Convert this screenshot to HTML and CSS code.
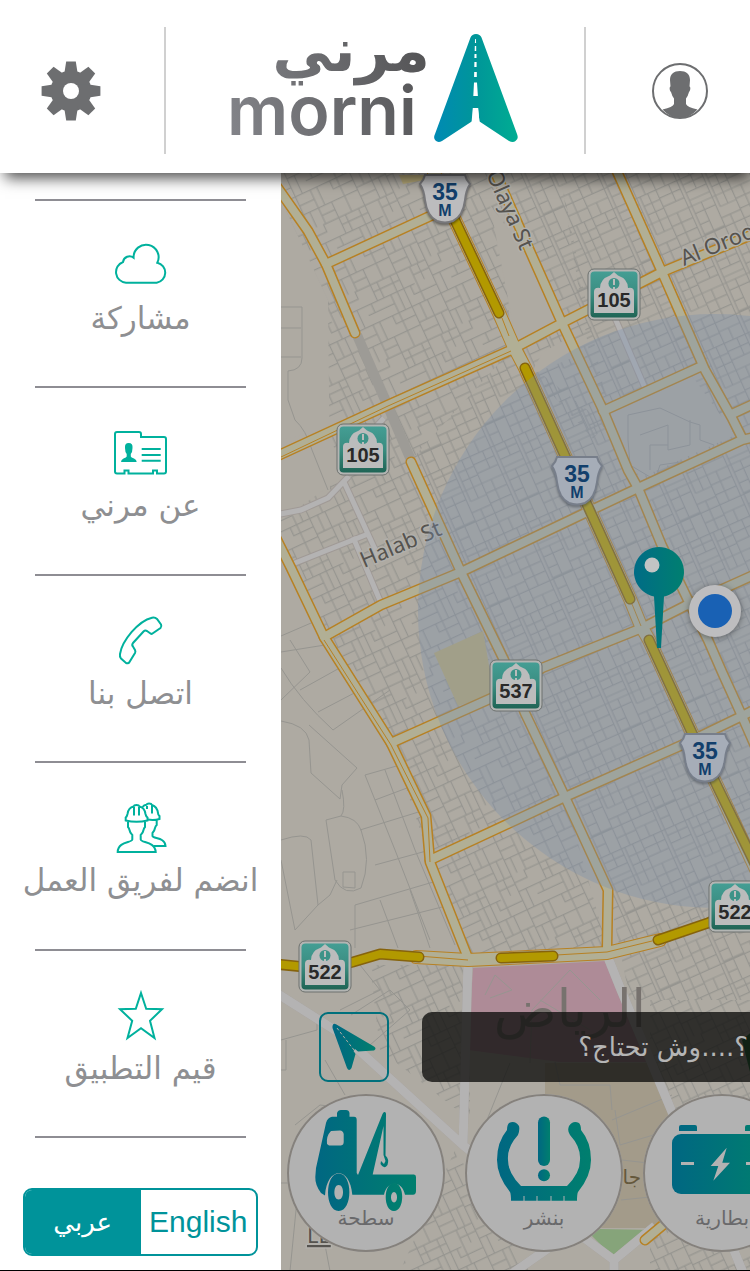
FILE: index.html
```
<!DOCTYPE html>
<html lang="ar">
<head>
<meta charset="utf-8">
<meta name="viewport" content="width=device-width, initial-scale=1">
<title>مرني</title>
<link rel="stylesheet" href="styles.css">
</head>
<body>
<header class="topbar">
  <button class="topbar-button settings" type="button" aria-label="الإعدادات">
    <svg class="gear" viewBox="-30 -30 60 60" aria-hidden="true">
      <defs><path id="teeth" d="M-4.8-29.4H4.8L6.6-18V18L4.8 29.4H-4.8L-6.6 18V-18Z"/></defs>
      <circle r="20.5"/>
      <use href="#teeth"/><use href="#teeth" transform="rotate(45)"/><use href="#teeth" transform="rotate(90)"/><use href="#teeth" transform="rotate(135)"/>
      <circle class="hole" r="8"/>
    </svg>
  </button>
  <div class="brand">
    <svg class="logo" viewBox="0 0 288 116" role="img" aria-label="morni">
      <defs>
        <linearGradient id="ink" gradientUnits="userSpaceOnUse" x1="0" y1="100" x2="190" y2="40"><stop offset="0" stop-color="#828388"/><stop offset="1" stop-color="#565658"/></linearGradient>
        <linearGradient id="brand" x1="0" y1="0" x2="1" y2="0"><stop offset="0" stop-color="#008ab4"/><stop offset=".5" stop-color="#009699"/><stop offset="1" stop-color="#00ad92"/></linearGradient>
      </defs>
      <text class="logo-arabic" x="199" y="44" direction="rtl" fill="url(#ink)">مرني</text>
      <text class="logo-latin" x="-4" y="108" fill="url(#ink)">morni</text>
      <path fill="url(#brand)" d="M239.500 10.500Q241 7 245 7Q249 7 250.500 10.500L286 107Q288 112 284.500 114Q282 116 278 114L248.500 94.500L247 82H242L241.500 94L211 114Q207 116 204.500 113.500Q202 111 204 107Z"/>
      <path class="road-dash" d="M244.600 12L245.400 12L245.600 16H244.400ZM244.300 19H245.700V24H244.200ZM244 27H246V31H243.900ZM243.900 35H246.100V40H243.800ZM243.700 45H246.300V50H243.600ZM243.500 55.500H246.500L247.400 69H242.800ZM242.300 81H247.700L249 96H241Z" transform="translate(-.5 0)"/>
    </svg>
  </div>
  <button class="topbar-button profile" type="button" aria-label="الملف الشخصي">
    <svg class="person" viewBox="0 0 56 56" aria-hidden="true">
      <path d="M28 8C34 8 38 11 38 17L37.500 23.500C39 24 38.300 28 37 29Q36 33 34 35.500V41Q35 44 45.500 46.500Q38 55 28 55Q18 55 10.500 46.500Q21 44 22 41V35.500Q20 33 19 29C17.700 28 17 24 18.500 23.500L18 17C18 11 22 8 28 8Z"/>
      <circle class="ring" cx="28" cy="28" r="27"/>
    </svg>
  </button>
</header>

<div class="content">
  <aside class="sidebar">
    <nav>
      <ul class="menu">
        <li><a class="menu-link" href="#share">
          <svg viewBox="0 0 56 56" aria-hidden="true"><path d="M13 44.700A10.700 10.700 0 0 1 10 24A6.600 6.600 0 0 1 20.600 19.700A12.500 12.500 0 1 1 44.300 24.700A10.200 10.200 0 0 1 43.700 44.700Z"/></svg>
          <span dir="rtl">مشاركة</span></a></li>
        <li><a class="menu-link" href="#about">
          <svg viewBox="0 0 56 56" aria-hidden="true"><path d="M4 7H26Q28 7 28 9V12H51Q53 12 53 14V46.500Q53 48.500 51 48.500H44V45.500H40V48.500H15.500V45.500H11.500V48.500H4Q2 48.500 2 46.500V9Q2 7 4 7ZM28.700 24H47.700M28.700 30H47.700M28.700 35.700H47.700"/><path class="solid" d="M15.700 18Q20 18 19.500 23Q19.500 27 17.800 29V31.500Q18 32.500 21 33.500Q23.700 34.500 23.700 37H8Q8 34.500 10.500 33.500Q13.500 32.500 13.700 31.500V29Q12 27 12 23Q11.500 18 15.700 18Z"/></svg>
          <span dir="rtl">عن مرني</span></a></li>
        <li><a class="menu-link" href="#contact">
          <svg viewBox="0 0 56 56" aria-hidden="true"><path d="M39 4.700Q42 4 44 6L48 11.500Q49 13.500 47.500 15L39.500 20.500Q38.500 21.300 37.500 20.500L34 18Q32 17 30.500 18.500L20 30Q18.500 32 20 33.500L22 37Q22.800 38.500 22 40L16.500 49Q15.500 51 13 50L8 45.500Q6.500 44 7 41C9 28 25 8 39 4.700Z"/></svg>
          <span dir="rtl">اتصل بنا</span></a></li>
        <li><a class="menu-link" href="#join">
          <svg viewBox="0 0 56 56" aria-hidden="true"><path d="M12.700 20.500V17.500Q14 16.500 14.500 14Q15.500 7.500 20.500 6.500Q21 5 23.500 5Q26 5 26.500 6.500Q31.500 7.500 32.500 14Q33 16.500 34.500 17.500V20.500Q23.500 23 12.700 20.500ZM21 7V15.500M26 7V15.500M15 22V27Q16 28 16.500 30Q17 33 19.300 35V39.500C19 43 5 41 4.700 52H42.700C42 41 28 43 27.700 39.500V35Q30 33 30.500 30Q31 28 32 27V22"/><path d="M29.500 7Q31 5 33.500 4.700Q34 3.500 36 3.500Q38.500 3.500 39 5Q44 6.500 45 13Q45 15 46.500 16V19Q41 20.500 34.500 19.500M34 6V9M39 5.500V13.500M43.700 20.500V25Q42.500 26 42 28Q41.500 31 39.500 33V36C40 39 52 37 52.500 46H41"/></svg>
          <span dir="rtl">انضم لفريق العمل</span></a></li>
        <li><a class="menu-link" href="#rate">
          <svg viewBox="0 0 56 56" aria-hidden="true"><path d="M28 5L33.200 20.800L49 21.200L37 32.800L41.500 50L28 40.300L14.500 50L19.200 32.800L7 21.200L22.800 20.800Z"/></svg>
          <span dir="rtl">قيم التطبيق</span></a></li>
      </ul>
    </nav>
    <div class="language" role="group" aria-label="اللغة">
      <button class="language-option selected" type="button" aria-pressed="true" dir="rtl">عربي</button>
      <button class="language-option" type="button" aria-pressed="false" lang="en">English</button>
    </div>
  </aside>

  <main class="stage">
    <svg class="map" viewBox="281 173 469 1097" preserveAspectRatio="xMinYMin slice" aria-label="خريطة الرياض">
      <defs>
        <pattern id="blocks" width="76" height="62" patternUnits="userSpaceOnUse" patternTransform="translate(326 264) rotate(-25) scale(1.2)">
          <path class="lot" d="M0 .5H76M0 17H50M12 31.500H76M0 46H60M.500 0V62M14 0V31M26 17V46M38 0V31M50 0V62M62 31V62M64 0V31M0 9H14M14 24H26M38 8H50M50 15H76M50 23H64M0 38H12V31M26 38H50M32 31V46M44 31V46M62 39H76M69 31V46M7 46V62M14 54H38V46M20 46V54M38 54V62M44 46V62M56 46V54H76M20 0V17M32 0V8H38M57 0V15M70 15V31M6 17V31"/>
        </pattern>
        <pattern id="dense" width="58" height="70" patternUnits="userSpaceOnUse" patternTransform="translate(562 323) rotate(-24) scale(1.2)">
          <path class="lot" d="M.500 0V70M19.500 0V70M22.500 0V70M41 0V70M44 0V35M0 .500H58M0 8H19M0 16H19M22 6H41M22 13H41M22 20H41M0 25H58M44 9H58M44 17H58M51 0V35M0 34H19M9 25V52M22 32H41M31 25V70M0 43H19M22 42H31M22 51H41M0 52H58M44 35H58M41 44H58M49 44V70M0 60H19M9 60V70M22 61H31M41 61H58M12 0V16M32 0V13"/>
        </pattern>
        <linearGradient id="pin" x1="0" y1="0" x2="1" y2="0"><stop offset="0" stop-color="#006c86"/><stop offset="1" stop-color="#007f70"/></linearGradient>
        <linearGradient id="sign" x1="0" y1="0" x2="0" y2="1"><stop offset="0" stop-color="#449e94"/><stop offset=".5" stop-color="#3a8c80"/><stop offset="1" stop-color="#1f6455"/></linearGradient>
        <g id="roads">
          <path d="M275 184L308 231L326 264L355 333"/>
          <path d="M326 264L452 206"/>
          <path d="M275 457L388 405L511 350L562 323L662 272L756 233"/>
          <path d="M411 462L461 572L504 660L525 713L565 797L608 890L607 948"/>
          <path d="M492 165L525 240L562 323L603 410L628 470L638 488L662 546L688 600L708 640L722 672L742 716L756 748"/>
          <path d="M615 167L662 272L705 370L732 418L742 438"/>
          <path d="M603 411L702 366M732 414L758 402"/>
          <path d="M324 637L381 605L461 572L585 513L638 488L742 440L760 436"/>
          <path d="M275 536L291 568L324 637L391 743L426 816L430 862L468 958"/>
          <path d="M391 743L494 697L542 668L642 628L685 606L756 574"/>
          <path d="M430 860L516 820L565 797L682 745L742 716L756 709"/>
          <path d="M645 1240L700 1194"/>
        </g>
        <g id="avenues">
          <path d="M434 173L452 214L499 313L513 345L525 368L630 599L641 626L649 640L692 733L718 788L760 878"/>
          <path d="M416 957L468 960L607 953L660 940"/>
        </g>
        <g id="highway">
          <path d="M452 214L499 313"/>
          <path d="M525 368L630 599"/>
          <path d="M649 640L692 733L718 788L756 866"/>
          <path d="M275 964L325 969L353 962L380 954L419 957"/>
          <path d="M501 958L553 956"/>
          <path d="M658 940L708 923L740 908"/>
        </g>
        <g id="side-roads">
          <path d="M275 515L301 510L328 498L349 476M344 482L368 534L380 560M290 565L368 534M353 537L381 603M364 440L384 418M615 318L645 388"/>
          <path class="wide" d="M275 992L341 1034L464 1146L560 1220L614 1260L655 1226M468 960L463 1146M607 955L621 990L672 1112L735 1253L744 1275M560 1240L510 1275M614 1258V1275"/>
        </g>
        <g id="green-sign">
          <rect class="sign-edge" x="-26" y="-25" width="52" height="51" rx="6"/>
          <rect x="-23.500" y="-22.500" width="47" height="46" rx="4" fill="url(#sign)"/>
          <path class="sign-plate" d="M0-22L4-18.500Q14-15 14-6Q20-7 20-2V19H-20V-2Q-20-7-14-6Q-14-15-4-18.500Z"/>
          <circle class="emblem" cy="-10.500" r="5.500"/><path class="emblem-mark" d="M0-15V-9M0-7V-5"/>
        </g>
        <path id="shield" d="M-20-24H20Q21-19 25-15Q21-9 20 1Q18 17 8 22Q0 25-8 22Q-18 17-20 1Q-21-9-25-15Q-21-19-20-24Z"/>
      </defs>
      <rect class="ground" x="281" y="173" width="469" height="1098"/>
      <path fill="url(#blocks)" d="M281 173H560L610 420L520 520L461 572L565 797L608 950L468 956L430 860L391 743L324 637L281 543V500L330 490L328 300L281 200Z"/>
      <path class="ground" d="M461 572L608 890L640 490L511 350L411 460ZM502 173H560L600 420L511 350Z"/>
      <path fill="url(#dense)" d="M502 173H750V1000L630 1000L608 890L461 570L411 460L511 350L561 323Z"/>
      <path fill="url(#blocks)" d="M370 965H470V1120L380 1050ZM455 1150L530 1271H400ZM650 1000H750V1270H650Z"/>
      <path class="ground" d="M281 440L327 430L345 475L281 520ZM490 205L520 245L555 320L517 345ZM543 352L565 340L572 358L530 375ZM604 415L692 376L735 435L640 478Z"/>
      <path class="lot" d="M281 307H302V358Q302 370 288 371V400L295 420Q306 430 312 450L328 490M281 328H301M281 357H301M281 721Q306 725 309 740L311 773L340 799L342 785L357 768L309 725M342 790Q346 810 341 816Q357 818 361 830Q372 860 361 888Q345 897 335 880L326 820L341 816M281 840Q305 832 311 840L318 905L295 930L281 860M318 905L330 895L337 880M343 887V872H355V888ZM281 1040L317 1030V1015M295 1125L320 1105L345 1108M281 1070H286V1040M325 1060L345 1095M290 1271L297 1200M330 1271L325 1245M281 1183H290M281 668Q300 700 333 730L390 690M281 700L310 672L290 640M360 965L380 990L340 1010M351 1015L390 990L410 1010L370 1045M281 636L318 620M281 652L325 645M300 690L345 665M318 712L360 690M365 775L400 765M375 800L415 785M360 830L425 810M375 865L430 850M355 905L440 880M350 930L450 905M365 775L395 850L430 940M385 770L415 850L455 945M355 905V948M380 900L398 948M410 890L430 948"/>
      <path class="lot" d="M628 415L660 408L690 422L700 425V440L714 445L708 458L660 465L655 480L630 465L628 440ZM640 435L668 425V450L690 445V420M650 470V445H668"/>
      <path class="park" d="M434 653L483 631L494 694L458 706ZM399 175H440L435 178L403 184Z"/>
      <path class="district" d="M473 968L606 961L625 1003L653 1062L560 1062L468 1050Z"/>
      <path class="campus" d="M545 1063H655L672 1112L690 1170L662 1228H592L545 1190Z"/>
      <path class="garden" d="M590 1234L600 1229L652 1230L614 1258Z"/>
      <path class="woods" d="M742 1040L760 1025V1080L750 1072Z"/>
      <path class="lot" d="M485 995L495 975L512 990L490 998M530 1063L532 1010L570 970L600 1000M540 1000L590 1030M555 1062L560 1085H610L612 1110M612 1120L672 1095M615 1110L620 1145L670 1130M622 1160L665 1165M621 1200L670 1195M510 1063L495 1100L483 1130V1150"/>
      <path class="closed-road" d="M357 335L411 460"/>
      <use class="side-casing" href="#side-roads"/>
      <use class="side-fill" href="#side-roads"/>
      <use class="casing" href="#roads"/>
      <use class="avenue-casing" href="#avenues"/>
      <use class="surface" href="#roads"/>
      <use class="avenue-surface" href="#avenues"/>
      <path class="median" d="M281 457L388 406L511 351M324 640L391 745L428 818L430 862M418 956L468 960M556 955L607 952L652 941M502 318L509 336M632 604L641 626"/>
      <use class="highway-casing" href="#highway"/>
      <use class="highway-fill" href="#highway"/>
      <g class="street-names">
        <text transform="translate(364 568) rotate(-23)">Halab St</text>
        <text transform="translate(486 174) rotate(66)">Olaya St</text>
        <text transform="translate(684 266) rotate(-22)">Al Orooba</text>
        <text x="307" y="1243" text-decoration="underline">LE</text>
      </g>
      <text class="campus-name" x="641" y="1184" direction="rtl">جا</text>
      <text class="city-name" x="646" y="1027" direction="rtl">الرياض</text>
      <use class="shield" href="#shield" x="445" y="199"/>
      <use class="shield" href="#shield" x="577" y="481"/>
      <use class="shield" href="#shield" x="705" y="758"/>
      <circle class="accuracy" cx="715" cy="611" r="297"/>
      <g class="route-number"><text x="445" y="200">35</text><text x="577" y="482">35</text><text x="705" y="759">35</text></g>
      <g class="route-letter"><text x="445" y="216">M</text><text x="577" y="498">M</text><text x="705" y="775">M</text></g>
      <use href="#green-sign" x="363" y="449"/><use href="#green-sign" x="614" y="294"/><use href="#green-sign" x="516" y="685"/><use href="#green-sign" x="325" y="966"/><use href="#green-sign" x="735" y="906"/>
      <g class="sign-number"><text x="363" y="462">105</text><text x="614" y="307">105</text><text x="516" y="698">537</text><text x="325" y="979">522</text><text x="735" y="919">522</text></g>
      <circle class="location-halo" cx="715" cy="611" r="26"/><circle class="location-dot" cx="715" cy="611" r="17"/>
      <path fill="url(#pin)" d="M654 596.500A25 25 0 1 1 664 596.500L661 648H657Z"/><circle class="pin-shine" cx="652" cy="565" r="7.500"/>
    </svg>

    <div class="controls">
      <div class="prompt-row">
        <button class="locate" type="button" aria-label="موقعي">
          <svg viewBox="0 0 66 66" aria-hidden="true">
            <defs><linearGradient id="dim" x1="0" y1="0" x2="1" y2="0"><stop offset="0" stop-color="#006782"/><stop offset="1" stop-color="#007f6e"/></linearGradient></defs>
            <path fill="url(#dim)" d="M11.500 12Q12 9 15 10.200L53 32.500Q56 34.500 53 36.500L37 37.500L34 35L32.500 37L34.500 40L30.500 54Q28 58 26 54L11.500 14Z"/>
            <path class="arrow-dash" d="M16 14L33 36"/>
          </svg>
        </button>
        <p class="prompt" dir="rtl">؟....وش تحتاج؟</p>
      </div>
      <div class="services">
        <button class="service" type="button">
          <svg viewBox="0 0 158 158" aria-hidden="true">
            <path fill="url(#dim)" fill-rule="evenodd" d="M50 22.700V19Q51 16 54 16H59Q62 16 62.500 19V22.700H67Q69.700 22.700 69.700 26V79L71 81L95.500 20Q96.500 17.500 98 18Q99.300 18.500 99 21L98.500 61.500Q102.500 65 100.500 71Q97 76 93.500 70L94 67L97 70L98.500 67L96.500 61V32L85.700 80.500H127Q129 80.500 129 83V97Q129 100.700 126 100.700H118C115 86 100 86 97 100.700H65.300C63 72 40 72 38 101.500L34 99Q28 91 28.300 83L29 74L39 29Q40.500 23.500 45 22.700ZM44 37Q39 42 40 50L42 51.500H54Q56.700 51 56.700 48V40Q56 36.500 53 36.500Z"/>
            <path fill="url(#dim)" fill-rule="evenodd" d="M51.700 79.500C66 79.500 66 117 51.700 117C37.500 117 37.500 79.500 51.700 79.500ZM51.700 91C46 91 46 105.500 51.700 105.500C57.500 105.500 57.500 91 51.700 91ZM107 89C118 89 118 117 107 117C96 117 96 89 107 89ZM107 98C103 98 103 108.500 107 108.500C111 108.500 111 98 107 98Z"/>
          </svg>
          <span dir="rtl">سطحة</span>
        </button>
        <button class="service" type="button">
          <svg viewBox="0 0 158 158" aria-hidden="true">
            <path fill="url(#dim)" d="M44 29Q50 26 54 32Q55 36 53 41Q42 53 43 66Q43 79 56 92H102Q115 79 115 66Q116 53 105 41Q102 37 104 32Q108 26 114 29Q116 31 116 36Q126 48 126 66Q126 82 113 98Q112 100 112 106.700H46Q46 100 45 98Q32 82 32 66Q32 48 42 36Q42 31 44 29Z"/>
            <rect fill="url(#dim)" x="73" y="22.500" width="12" height="49.500" rx="6"/><circle fill="url(#dim)" cx="79" cy="81.300" r="6"/>
            <path class="tread" d="M59 102V107M72 102V107M86 102V107M99 102V107"/>
          </svg>
          <span dir="rtl">بنشر</span>
        </button>
        <button class="service" type="button">
          <svg viewBox="0 0 158 158" aria-hidden="true">
            <rect fill="url(#dim)" x="29" y="40" width="100" height="60" rx="9"/>
            <path fill="url(#dim)" d="M36 37V33Q36 31 38 31H52Q54 31 54 33V37ZM102 37V33Q102 31 104 31H118Q120 31 120 33V37Z"/>
            <path class="terminal" d="M38 69.500H51M103 69.500H116"/>
            <path class="bolt" d="M83.700 53.700L67.700 72H75.300L70.300 86.700L87 68.700H79.300Z"/>
          </svg>
          <span dir="rtl">بطارية</span>
        </button>
      </div>
    </div>
  </main>
</div>
</body>
</html>
```
FILE: styles.css
```
* { box-sizing: border-box; }

body {
  margin: 0;
  min-height: 100vh;
  display: flex;
  flex-direction: column;
  overflow-x: hidden;
  background: #fff;
  border-bottom: 1px solid #000;
  font-family: "DejaVu Sans", sans-serif;
}

button {
  margin: 0;
  padding: 0;
  border: 0;
  background: none;
  font: inherit;
  cursor: pointer;
}

svg { display: block; }

/* Top bar */
.topbar {
  position: relative;
  z-index: 2;
  display: grid;
  grid-template-columns: 166px 1fr 166px;
  padding: 27px 0 19px;
  background: #fff;
  box-shadow: 2px 8px 14px -3px rgba(0, 0, 0, .7);
}

.topbar-button {
  display: flex;
  align-items: center;
  height: 127px;
}

.settings {
  padding-left: 41px;
  border-right: 2px solid #d0d0d0;
}

.profile {
  justify-content: flex-end;
  padding-right: 42px;
  border-left: 2px solid #d0d0d0;
}

.gear { width: 60px; fill: #6d6e70; }
.gear .hole { fill: #fff; }
.person { width: 56px; fill: #6d6e70; }
.person .ring { fill: none; stroke: #6d6e70; stroke-width: 2; }

.brand {
  display: flex;
  justify-content: center;
}

.logo {
  width: 288px;
  height: 116px;
  overflow: visible;
}

.logo-latin { font: 600 68px Inter, sans-serif; }
.logo-arabic { font: 700 60px "DejaVu Sans", sans-serif; }
.road-dash { fill: #fff; }

/* Content */
.content {
  flex: 1;
  display: grid;
  grid-template-columns: 281px 1fr;
}

.sidebar {
  display: flex;
  flex-direction: column;
  gap: 50px;
  padding: 26px 0 14px;
  background: #fff;
}

.sidebar nav {
  flex: 1;
  display: flex;
}

.menu {
  flex: 1;
  display: flex;
  flex-direction: column;
  margin: 0;
  padding: 0;
  list-style: none;
}

.menu li { flex: 1; }

.menu li::before,
.menu::after {
  content: "";
  display: block;
  height: 2px;
  margin: 0 35px;
  background: #8e8d93;
}

.menu-link {
  display: flex;
  flex-direction: column;
  align-items: center;
  padding: 37px 0;
  color: #8e8f92;
  font-size: 31px;
  line-height: 48px;
  white-space: nowrap;
  text-decoration: none;
}

.menu-link svg {
  width: 56px;
  height: 56px;
  fill: none;
  stroke: #00b19d;
  stroke-width: 2;
}

.menu-link .solid { fill: #00b19d; stroke: none; }

.language {
  display: grid;
  grid-template-columns: 1fr 1fr;
  height: 68px;
  margin: 0 23px;
  overflow: hidden;
  border: 2px solid #00939a;
  border-radius: 9px;
}

.language-option {
  color: #00939a;
  font: 30px "Liberation Sans", "DejaVu Sans", sans-serif;
}

.language-option.selected {
  background: #00939a;
  color: #fff;
  font-size: 26px;
}

/* Map */
.stage {
  position: relative;
  display: flex;
  flex-direction: column;
  justify-content: flex-end;
  min-width: 0;
  overflow: hidden;
  background: #aeaaa2;
}

.map {
  position: absolute;
  inset: 0;
  width: 100%;
  height: 100%;
  fill: none;
}

.ground { fill: #aeaaa2; }
.lot { fill: none; stroke: #969590; stroke-width: 1; }
.park { fill: #b5a878; }
.district { fill: #ae8b97; }
.campus { fill: #a39b8a; }
.garden { fill: #86a47a; }
.woods { fill: #1f6a35; }
.closed-road { stroke: #9d9b96; stroke-width: 10; }

.side-casing { stroke: #a09a96; stroke-width: 7; }
.side-fill { stroke: #b4b3b3; stroke-width: 5; }
.wide { stroke-width: 9; }
.casing,
.avenue-casing { stroke: #b78123; stroke-width: 11; stroke-linejoin: round; stroke-linecap: round; }
.surface,
.avenue-surface { stroke: #b1af95; stroke-width: 8; stroke-linejoin: round; stroke-linecap: round; }
.avenue-casing { stroke-width: 14; }
.avenue-surface { stroke-width: 12; }
.median { stroke: #b78123; stroke-width: 1; }
.highway-casing { stroke: #86630c; stroke-width: 11; stroke-linejoin: round; stroke-linecap: round; }
.highway-fill { stroke: #b29900; stroke-width: 8; stroke-linejoin: round; stroke-linecap: round; }

.street-names text {
  fill: #55534f;
  font: 22px "Noto Sans", sans-serif;
  stroke: #b2b0ab;
  stroke-width: 3;
  paint-order: stroke;
}

.city-name { fill: #77726e; font: 52px "DejaVu Sans", sans-serif; }
.campus-name { fill: #65583c; font: 20px "DejaVu Sans", sans-serif; }
.accuracy { fill: rgba(122, 144, 174, .33); }

.shield { fill: #bcbcbe; stroke: #77777a; stroke-width: 2; filter: drop-shadow(0 2px 1px rgba(0, 0, 0, .4)); }
.route-number { fill: #123f6c; font: 700 23px "Liberation Sans", sans-serif; text-anchor: middle; }
.route-letter { fill: #123f6c; font: 700 16px "Liberation Sans", sans-serif; text-anchor: middle; }
.sign-edge { fill: #b3b5b3; stroke: #6d716e; stroke-width: 1; }
.sign-plate { fill: #bbbcbc; }
.emblem { fill: #3e9388; }
.emblem-mark { stroke: #bbbcbc; stroke-width: 2; }
.sign-number { fill: #292929; font: 700 20px "Liberation Sans", sans-serif; text-anchor: middle; }

.location-halo { fill: #bdbdbf; filter: drop-shadow(0 1px 3px rgba(0, 0, 0, .4)); }
.location-dot { fill: #1961b4; }
.pin-shine { fill: #c2c4c4; }

/* Controls over the map */
.controls {
  position: relative;
  display: flex;
  flex-direction: column;
  gap: 12px;
  padding-bottom: 18px;
}

.prompt-row {
  display: flex;
  gap: 33px;
  padding-left: 38px;
}

.locate {
  flex: none;
  width: 70px;
  height: 70px;
  border: 2px solid #00707c;
  border-radius: 9px;
}

.locate svg { fill: none; }
.arrow-dash { stroke: #aeaaa2; stroke-width: 1; stroke-dasharray: 3 2; }

.prompt {
  flex: 1;
  margin: 0;
  padding: 0 2px;
  border-radius: 10px 0 0 10px;
  background: rgba(12, 12, 10, .77);
  color: #b5b5b5;
  font-size: 26px;
  line-height: 70px;
  text-align: start;
  white-space: nowrap;
  overflow: hidden;
}

.services {
  display: flex;
  gap: 20px;
  padding-left: 6px;
}

.service {
  flex: none;
  display: grid;
  width: 158px;
  height: 158px;
  overflow: hidden;
  border-radius: 50%;
  background: #b2b2b2;
  box-shadow: inset 0 0 0 2px #85817c;
  color: #69696b;
  font-size: 20px;
  line-height: 28px;
}

.service svg,
.service span { grid-area: 1 / 1; }

.service span {
  align-self: end;
  padding-bottom: 20px;
}

.tread { stroke: #b2b2b2; stroke-width: 1; }
.terminal { stroke: #b2b2b2; stroke-width: 3; }
.bolt { fill: #b2b2b2; }
```
